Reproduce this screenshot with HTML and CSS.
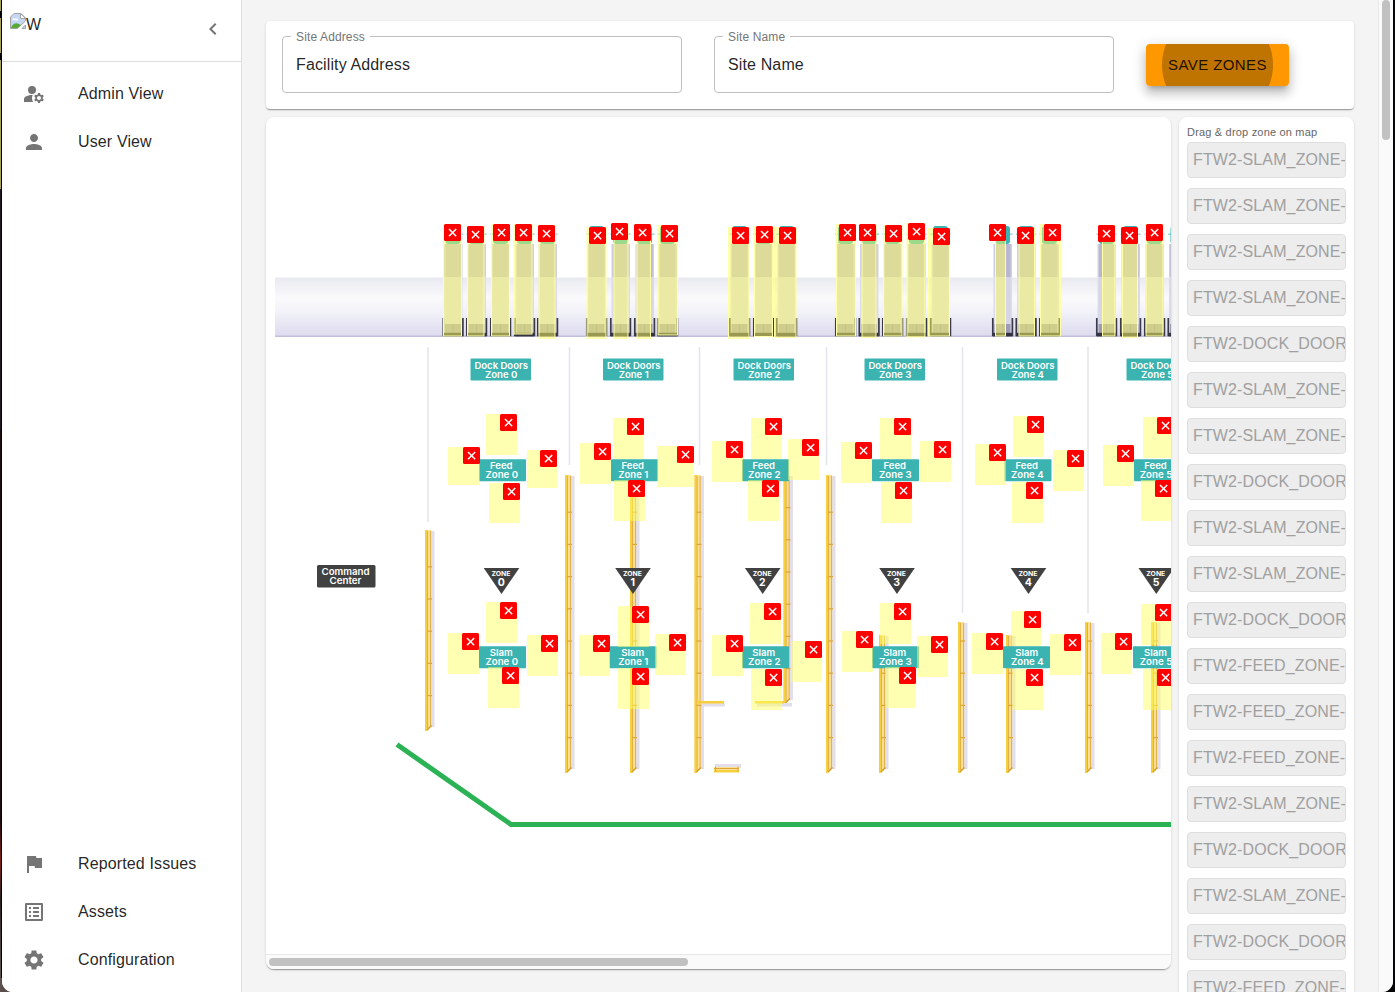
FILE: index.html
```
<!DOCTYPE html>
<html lang="en">
<head>
<meta charset="utf-8">
<title>Site zones</title>
<link rel="stylesheet" href="styles.css">
</head>
<body>
<div class="window">
  <aside class="sidebar">
    <div class="brand">
      <svg class="broken" width="16" height="16" viewBox="0 0 16 16">
        <path d="M4 .5h7l4.500 4.500v3L7.500 15.500H.5V4z" fill="#c6d7f5" stroke="#a3a3a3"/>
        <path d="M2.500 7c0-2 2.500-2.500 3-1 1.500-1 3 0 2.500 1.500z" fill="#fff"/>
        <path d="M1 15c1-4 5-6 8-4l2 1-3.500 3z" fill="#58aa36"/>
        <path d="M10.500.5v5h5z" fill="#fff" stroke="#a3a3a3"/>
        <path d="M12 15.500h3.500V12z" fill="#c6d7f5" stroke="#a3a3a3"/>
      </svg><span class="brand-alt">W</span>
      <svg class="chevron" viewBox="0 0 24 24"><path d="M15.410 7.410 14 6l-6 6 6 6 1.410-1.410L10.830 12z"/></svg>
    </div>
    <nav class="menu">
      <a class="menu-item"><svg class="icon" viewBox="0 0 24 24"><circle cx="10" cy="8" r="4"/><path d="M10.670 13.020C10.450 13.010 10.230 13 10 13c-2.420 0-4.680.67-6.610 1.820-.88.52-1.390 1.500-1.390 2.530V20h9.260c-.79-1.130-1.260-2.510-1.260-4 0-1.070.25-2.070.67-2.980zM20.750 16c0-.22-.03-.42-.06-.63l1.140-1.010-1-1.730-1.450.49c-.32-.27-.68-.48-1.080-.63L18 11h-2l-.3 1.490c-.4.15-.76.36-1.080.63l-1.450-.49-1 1.730 1.140 1.010c-.03.21-.06.41-.06.63s.03.42.06.63l-1.140 1.010 1 1.730 1.450-.49c.32.27.68.48 1.080.63L16 21h2l.3-1.490c.4-.15.76-.36 1.080-.63l1.450.49 1-1.730-1.140-1.010c.03-.21.06-.41.06-.63zM17 18c-1.100 0-2-.9-2-2s.9-2 2-2 2 .9 2 2-.9 2-2 2z"/></svg><span>Admin View</span></a>
      <a class="menu-item"><svg class="icon" viewBox="0 0 24 24"><path d="M12 12c2.210 0 4-1.790 4-4s-1.790-4-4-4-4 1.790-4 4 1.790 4 4 4zm0 2c-2.670 0-8 1.340-8 4v2h16v-2c0-2.660-5.330-4-8-4z"/></svg><span>User View</span></a>
    </nav>
    <nav class="menu menu-bottom">
      <a class="menu-item"><svg class="icon" viewBox="0 0 24 24"><path d="M14.400 6 14 4H5v17h2v-7h5.600l.4 2h7V6z"/></svg><span>Reported Issues</span></a>
      <a class="menu-item"><svg class="icon" viewBox="0 0 24 24"><path d="M19 5v14H5V5h14m1.100-2H3.900c-.5 0-.9.400-.9.900v16.200c0 .4.400.9.900.9h16.200c.4 0 .9-.5.900-.9V3.900c0-.5-.5-.9-.9-.9zM11 7h6v2h-6V7zm0 4h6v2h-6v-2zm0 4h6v2h-6zM7 7h2v2H7zm0 4h2v2H7zm0 4h2v2H7z"/></svg><span>Assets</span></a>
      <a class="menu-item"><svg class="icon" viewBox="0 0 24 24"><path d="M19.140 12.940c.04-.3.060-.61.060-.94 0-.32-.02-.64-.07-.94l2.030-1.580c.18-.14.23-.41.120-.61l-1.920-3.320c-.12-.22-.37-.29-.59-.22l-2.390.96c-.5-.38-1.030-.7-1.620-.94l-.36-2.540c-.04-.24-.24-.41-.48-.41h-3.840c-.24 0-.43.170-.47.410l-.36 2.540c-.59.240-1.130.570-1.620.940l-2.390-.96c-.22-.08-.47 0-.59.220L2.740 8.870c-.12.210-.08.470.12.610l2.030 1.580c-.05.300-.09.630-.09.940s.02.640.07.940l-2.030 1.580c-.18.140-.23.410-.12.610l1.920 3.320c.12.220.37.290.59.220l2.390-.96c.5.380 1.030.700 1.620.940l.36 2.540c.05.240.24.410.48.410h3.840c.24 0 .44-.17.470-.41l.36-2.540c.59-.24 1.130-.56 1.620-.94l2.390.96c.22.080.47 0 .59-.22l1.920-3.320c.12-.22.070-.47-.12-.61l-2.010-1.580zM12 15.600c-1.980 0-3.600-1.620-3.600-3.600s1.620-3.600 3.600-3.600 3.600 1.620 3.600 3.600-1.620 3.600-3.600 3.600z"/></svg><span>Configuration</span></a>
    </nav>
  </aside>

  <main class="main">
    <section class="card form-card">
      <fieldset class="field"><legend>Site Address</legend><span>Facility Address</span></fieldset>
      <fieldset class="field"><legend>Site Name</legend><span>Site Name</span></fieldset>
      <button class="save">Save Zones</button>
    </section>
    <div class="work">
      <section class="card map-card">
        <svg class="map" id="map" viewBox="266 117 905 837"></svg>
        <div class="hscroll"><div class="hthumb"></div></div>
      </section>
      <section class="card zones-card">
        <p class="hint">Drag &amp; drop zone on map</p>
        <ul class="zones">
          <li>FTW2-SLAM_ZONE-</li>
          <li>FTW2-SLAM_ZONE-</li>
          <li>FTW2-SLAM_ZONE-</li>
          <li>FTW2-SLAM_ZONE-</li>
          <li>FTW2-DOCK_DOOR</li>
          <li>FTW2-SLAM_ZONE-</li>
          <li>FTW2-SLAM_ZONE-</li>
          <li>FTW2-DOCK_DOOR</li>
          <li>FTW2-SLAM_ZONE-</li>
          <li>FTW2-SLAM_ZONE-</li>
          <li>FTW2-DOCK_DOOR</li>
          <li>FTW2-FEED_ZONE-</li>
          <li>FTW2-FEED_ZONE-</li>
          <li>FTW2-FEED_ZONE-</li>
          <li>FTW2-SLAM_ZONE-</li>
          <li>FTW2-DOCK_DOOR</li>
          <li>FTW2-SLAM_ZONE-</li>
          <li>FTW2-DOCK_DOOR</li>
          <li>FTW2-FEED_ZONE-</li>
        </ul>
      </section>
    </div>
  </main>
  <div class="vscroll"><div class="vthumb"></div></div>
</div>
<script src="map.js"></script>
</body>
</html>
```

FILE: styles.css
```
* { box-sizing: border-box; }
html, body { height: 100%; margin: 0; overflow: hidden; }
body {
  padding: 0 2px;
  font: 16px/24px "Liberation Sans", Arial, sans-serif;
  letter-spacing: 0.13px;
  color: rgba(0, 0, 0, 0.87);
  background:
    linear-gradient(#a9a15c 0 11px, #000 11px 18px, #a9a15c 18px 53px, #000 53px 60px, #a9a15c 60px 189px, #201820 189px 430px, #1c0c0e 430px 820px, #7a2018 860px, #2a2020 900px, #5c5250 970px) 0 0 / 1px 100% no-repeat,
    linear-gradient(#5b4d4b, #5b4d4b) 0 100% / 12px 14px no-repeat,
    #050507;
}
.window {
  display: flex;
  height: 992px;
  overflow: hidden;
  border-radius: 0 0 11px 11px;
  background: #f4f4f4;
}
.sidebar {
  display: flex;
  flex-direction: column;
  flex: none;
  width: 240px;
  background: #fff;
  border-right: 1px solid #dedede;
}
.brand {
  display: flex;
  align-items: flex-start;
  height: 62px;
  padding: 13px 16px 0 8px;
  border-bottom: 1px solid #dedede;
}
.brand-alt { line-height: 23px; }
.chevron { width: 24px; height: 24px; margin: 4px 0 0 auto; fill: #757575; }
.menu { padding: 8px 0; }
.menu-bottom { margin-top: auto; }
.menu-item {
  display: flex;
  align-items: center;
  gap: 32px;
  height: 48px;
  padding-left: 20px;
}
.menu-item span { margin-top: -1px; }
.icon { width: 24px; height: 24px; fill: #757575; }

.main {
  flex: 1;
  min-width: 0;
  padding: 21px 24px 0;
}
.card {
  background: #fff;
  border-radius: 4px;
  box-shadow: 0 2px 1px -1px rgba(0, 0, 0, 0.2), 0 1px 1px rgba(0, 0, 0, 0.14), 0 1px 3px rgba(0, 0, 0, 0.12);
}
.form-card {
  display: flex;
  align-items: center;
  gap: 32px;
  height: 88px;
  padding: 0 16px;
}
.field {
  flex: none;
  width: 400px;
  height: 63px;
  margin: 0;
  margin-top: -8px;
  padding: 0 8px;
  border: 1px solid #c0c0c0;
  border-radius: 4px;
}
.field legend {
  padding: 0 5px;
  font-size: 12px;
  line-height: 14px;
  color: #757575;
}
.field span { display: block; padding: 9px 5px 0; }
.save {
  width: 143px;
  height: 42px;
  padding: 0;
  border: 0;
  border-radius: 4px;
  font: 15px/26px "Liberation Sans", Arial, sans-serif;
  letter-spacing: 0.42px;
  text-transform: uppercase;
  color: rgba(0, 0, 0, 0.87);
  background: radial-gradient(circle at 50% 50%, #bf7300 55px, #ff9800 56px);
  box-shadow: 0 5px 5px -3px rgba(0, 0, 0, 0.2), 0 8px 10px 1px rgba(0, 0, 0, 0.14), 0 3px 14px 2px rgba(0, 0, 0, 0.12);
}
.work {
  display: flex;
  align-items: flex-start;
  gap: 8px;
  margin-top: 8px;
}
.map-card, .zones-card { border-radius: 8px; overflow: hidden; }
.map-card { flex: none; width: 905px; height: 852px; }
.map { display: block; width: 905px; height: 837px; }
.hscroll {
  height: 15px;
  padding: 3px;
  background: #fafafa;
  border-top: 1px solid #e8e8e8;
}
.hthumb { width: 419px; height: 8px; border-radius: 4px; background: #c1c1c1; }
.zones-card { flex: none; width: 175px; height: 900px; padding: 8px; }
.hint {
  margin: 0;
  font-size: 11px;
  line-height: 15px;
  letter-spacing: 0.19px;
  color: #666;
}
.zones { display: grid; gap: 10px; margin: 2px 0 0; padding: 0; list-style: none; }
.zones li {
  width: 159px;
  height: 36px;
  padding: 0 0 0 5px;
  overflow: hidden;
  border: 1px solid #dedede;
  border-radius: 4px;
  line-height: 33px;
  white-space: nowrap;
  color: #a0a0a0;
  background: #ededed;
}
.vscroll {
  flex: none;
  width: 15px;
  padding-left: 3px;
  background: #fafafa;
  border-left: 1px solid #e8e8e8;
}
.vthumb { width: 8px; height: 140px; border-radius: 4px; background: #c1c1c1; }

.sign { font: 600 9.300px Inter, "Open Sans", sans-serif; letter-spacing: 0; fill: #fff; text-anchor: middle; }
.sign-small { font-size: 6.500px; font-weight: 700; }
.sign-digit { font-size: 10.500px; font-weight: 700; }
.teal { fill: #3bb3b1; }
.dark { fill: #414141; }
.wall { fill: #e4e4ec; }
.zone { fill: rgba(255, 255, 100, 0.5); }
.dock-zone { fill: rgba(255, 255, 100, 0.5); stroke: #ffffa8; stroke-width: 1; }
.badge { fill: #f00; }
.cross { stroke: #fff; stroke-width: 1.500; fill: none; }
.rail-shadow { fill: #e2deea; }
.rail { fill: #fbdf92; }
.rail-edge { fill: #f7cf3c; }
.rail-line { fill: #dda637; }
.route { fill: none; stroke: #2ab254; stroke-width: 5; }
```

FILE: map.js
```
const out = [];
const rect = (cls, x, y, w, h, extra = '') =>
  out.push(`<rect class="${cls}" x="${x}" y="${y}" width="${w}" height="${h}" ${extra}/>`);
const text = (cls, x, y, value, length) =>
  out.push(`<text class="sign ${cls}" x="${x}" y="${y}" ${length ? `textLength="${length}" lengthAdjust="spacingAndGlyphs"` : ''}>${value}</text>`);

out.push(`<defs><linearGradient id="road" x1="0" y1="0" x2="0" y2="1">
<stop offset="0" stop-color="#e9e9f1"/><stop offset=".35" stop-color="#fafafc"/>
<stop offset=".6" stop-color="#f1f1f8"/><stop offset="1" stop-color="#dcdaee"/></linearGradient></defs>`);

// Trucks, the road over them, and the dock brackets
const docks = [442.5, 466, 490, 514, 537, 586, 610, 634, 657, 729, 753, 776,
  835, 858.5, 882, 906, 930, 992, 1015.5, 1039, 1096, 1120, 1144, 1167.5];
rect('', 275, 277.5, 896, 59, 'fill="url(#road)"');
rect('', 275, 335.5, 896, 1.5, 'fill="#c3c0dc"');
docks.forEach(x => {
  rect('teal', x + 0.5, 233.7, 20, 0.8);
  rect('teal', x + 3, 226, 15, 18, 'rx="3"');
  rect('', x + 1.500, 244, 18.500, 33.500, 'fill="#cfcfe2"');
  rect('', x + 3, 244, 15.500, 33.500, 'fill="#b9b7cf"');
  rect('', x + 1.500, 277.500, 18.500, 55, 'fill="#dcdbea"');
  rect('', x + 3, 277.500, 15.500, 47, 'fill="#d6d5e4"');
  rect('', x + 2.500, 324, 16, 9, 'fill="#9c9ab4"');
  rect('', x + 10.200, 324, 0.800, 8, 'fill="#85839c"');
  out.push(`<path d="M${x + 0.8} 318v17.500h19.600v-17.500" fill="none" stroke="#3b3a48" stroke-width="1.700"/>`);
  rect('', x + 1, 332.800, 19, 3.500, 'fill="#33323f"');
});

// Walls
[[428, 522], [569.5, 465], [699.5, 465], [826.5, 465], [962.5, 613], [1088, 613]]
  .forEach(([x, y]) => rect('wall', x - 0.75, 347, 1.5, y - 347));

// Conveyors
const rail = (x, y1, y2) => {
  rect('rail-shadow', x + 5, y1 + 1, 4.500, y2 - y1 - 4);
  out.push(`<path class="rail" d="M${x} ${y1}h6.200V${y2 - 5}l-4.200 6h-2z"/>`);
  rect('rail-edge', x, y1, 2.3, y2 - y1 + 1);
  rect('rail-line', x + 2.2, y1 + 1, 0.8, y2 - y1 - 3);
  rect('rail-line', x + 5.2, y1 + 1, 0.8, y2 - y1 - 5);
  for (let y = y2 - 35; y > y1 + 6; y -= 32.2) rect('rail-line', x + 2, y, 5, 1.2);
  out.push(`<path d="M${x + 2} ${y2}l4.500-4.500" stroke="#d59a24" stroke-width="1.500"/>`);
};
[[425, 530, 730], [565, 475, 772], [630, 475, 772], [694.5, 475, 772], [783.5, 475, 703],
  [826, 475, 772], [879, 635, 772], [958, 622, 772], [1006, 635, 772], [1085, 622, 772], [1151, 622, 772]]
  .forEach(r => rail(...r));
rect('rail-shadow', 702, 703, 23, 3.500);
rect('rail-edge', 697, 701, 27, 2.500);
rect('rail-shadow', 757, 703, 35, 3.500);
rect('rail-edge', 755, 701, 29, 2.500);
rect('rail-shadow', 715, 764, 26, 4);
rect('rail', 714, 767, 25, 5);
rect('rail-line', 714, 768, 25, 1);
rect('rail-edge', 714, 770, 25, 2.500);
rect('rail-line', 715, 766.500, 1, 5);
rect('rail-line', 737.500, 766.500, 1, 5);

out.push('<path class="route" d="M397 744.500 511 824.500H1171"/>');

// Signs
rect('dark', 317, 565, 58.500, 22.500, 'rx="1.500"');
text('', 345.5, 574.500, 'Command', 48);
text('', 345.5, 583.500, 'Center', 32);
const signs = [
  { dock: 470.5, feed: 479, slam: 479, mid: 501.8 },
  { dock: 603, feed: 611, slam: 609.5, mid: 633.3 },
  { dock: 733.5, feed: 742, slam: 742, mid: 764.3 },
  { dock: 864.5, feed: 872, slam: 872, mid: 895.3 },
  { dock: 997, feed: 1004.5, slam: 1003, mid: 1027.3 },
  { dock: 1126.500, feed: 1134, slam: 1133, mid: 1156 },
];
const tri = [501.5, 633, 762.7, 897, 1028.5, 1156.300];
signs.forEach((s, i) => {
  rect('teal', s.dock, 358.500, 60.500, 22, 'rx="1"');
  text('', s.dock + 30.7, 369, 'Dock Doors', 53.500);
  text('', s.dock + 30.7, 378, 'Zone ' + i, i === 1 ? 30 : 32.500);
  rect('teal', s.feed, 459.300, 47, 22, 'rx="1"');
  text('', s.mid - 0.500, 469, 'Feed', 22.500);
  text('', s.mid, 478, 'Zone ' + i, i === 1 ? 30 : 32.500);
  out.push(`<path class="dark" d="M${tri[i] - 17.8} 568h35.600L${tri[i]} 594z"/>`);
  text('sign-small', tri[i] - 0.5, 576, 'ZONE', 19);
  text('sign-digit', tri[i] - 0.3, 586, i);
  rect('teal', s.slam, 646.300, 47, 22, 'rx="1"');
  text('', s.mid - 0.500, 655.500, 'Slam', 23);
  text('', s.mid, 664.500, 'Zone ' + i, i === 1 ? 30 : 32.500);
});

// Placed zones with their remove badges
const badge = (x, y) => {
  rect('badge', x, y, 17, 17, 'rx="1.500"');
  out.push(`<path class="cross" d="M${x + 5} ${y + 5}l7.200 7.200m0-7.200l-7.200 7.200"/>`);
};
// left, right, bottom, badge x, badge y
[[443.5, 461.5, 336, 444, 224], [467.5, 484, 336, 467, 226], [491.5, 509.5, 336, 493, 224],
  [514, 532, 334, 515, 224], [539, 555, 338.5, 538, 225],
  [587, 606, 338.5, 589, 227], [614, 628, 338.5, 611, 223], [637, 650.5, 338.5, 634, 224], [658, 677.5, 335, 661, 225],
  [728.5, 749, 338.5, 732, 227], [754.5, 772.5, 336.5, 756, 226], [774.5, 796, 337.5, 779, 227],
  [836.5, 855.5, 336, 839, 224], [862, 876, 337.5, 859, 224], [883.5, 902, 336, 885, 225],
  [907, 925, 337, 908, 223], [928.5, 949.5, 336, 933, 228],
  [995.5, 1005.5, 336, 989, 224], [1019, 1034.5, 336, 1017, 227], [1040.5, 1060.5, 336, 1044, 224],
  [1102.5, 1115, 336, 1098, 225], [1122.5, 1137.5, 337.5, 1121, 227], [1146, 1163, 336, 1146, 224]]
  .forEach(([l, r, b, bx, by]) => {
    rect('dock-zone', l, by + 0.5, r - l, b - by - 0.5);
    badge(bx, by);
  });
[[486, 414], [448, 447, 32, 38, 15], [527, 450, 30, 38, 13], [489, 483, 31, 40],
  [613, 418], [580, 443], [657, 446, 37, 41, 20], [614, 480],
  [712, 441], [751, 418], [788, 439], [748, 480],
  [841, 442], [880, 418], [920, 441], [881, 482],
  [975, 444], [1013, 416], [1053, 450], [1012, 482],
  [1103, 445], [1143, 417], [1141, 480],
  [448, 633], [486, 602], [527, 635], [488, 667],
  [579, 635], [618, 606], [655, 634], [618, 668],
  [712, 635], [750, 603], [791, 641], [751, 669],
  [842, 631], [880, 603], [917, 636], [885, 667],
  [972, 633], [1011, 611, 30, 35, 13], [1050, 634], [1012, 669],
  [1101, 633], [1141, 604], [1143, 669]]
  .forEach(([x, y, w = 31, h = 41, dx = 14]) => {
    rect('zone', x, y, w, h);
    badge(x + dx, y);
  });

document.getElementById('map').innerHTML = out.join('');
```
